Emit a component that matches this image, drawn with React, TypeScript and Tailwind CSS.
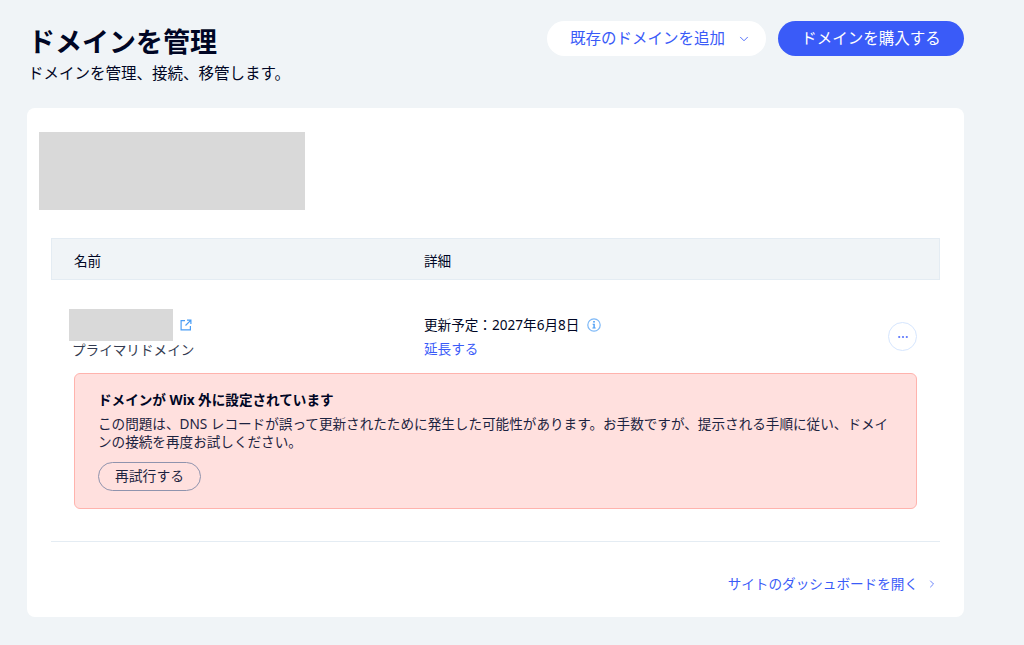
import { ChevronDown, ChevronRight } from "lucide-react";

const FONT = "font-['Noto_Sans','Noto_Sans_CJK_JP',sans-serif]";

function Header() {
  return (
    <div className="flex items-start justify-between">
      <div className="pl-px pt-[23px]">
        <h1 className="text-[27px] leading-[38px] font-bold text-[#000624]">ドメインを管理</h1>
        <p className="text-[15.5px] leading-[24px] text-[#000624]">ドメインを管理、接続、移管します。</p>
      </div>
      <div className="flex gap-3 pt-[21px]">
        <button
          type="button"
          className="flex h-[35px] w-[219px] items-center gap-3 rounded-full bg-white pl-[23px] text-[15.5px] text-[#3a5bf8]"
        >
          既存のドメインを追加
          <ChevronDown className="h-3.5 w-3.5" strokeWidth={1.5} />
        </button>
        <button
          type="button"
          className="h-[35px] w-[186px] rounded-full bg-[#3a5bf8] text-[15.5px] text-white"
        >
          ドメインを購入する
        </button>
      </div>
    </div>
  );
}

function DomainRow() {
  return (
    <div className="flex h-[93px] items-start">
      <div className="w-[373px] pl-[18px] pt-[29px]">
        <div className="flex items-center gap-[7px]">
          <div className="h-8 w-[104px] bg-[#d9d9d9]" />
          <svg viewBox="0 0 12 12" className="h-3 w-3 fill-none stroke-[#4a9df5]" strokeWidth="1.2">
            <path d="M5 1.6H1.1v9.3h9.3V7" />
            <path d="M7 1.1h3.9V5M10.7 1.3 5.5 6.5" />
          </svg>
        </div>
        <div className="pl-[3px] text-[13.6px] leading-[18px] text-[#323a50]">プライマリドメイン</div>
      </div>
      <div className="flex-1 pt-[35px] text-[13.6px] leading-5">
        <div className="flex items-center gap-2 text-[#000624]">
          更新予定：2027年6月8日
          <svg viewBox="0 0 14 14" className="h-3.5 w-3.5">
            <circle cx="7" cy="7" r="6.2" fill="none" stroke="#7db8f7" strokeWidth="1.2" />
            <rect x="6.2" y="3" width="1.6" height="1.6" fill="#4a9df5" />
            <path d="M5.6 5.8h2.2v3.6h.9v1H5.4v-1h1V6.8h-.8z" fill="#4a9df5" />
          </svg>
        </div>
        <a className="mt-1 block text-[#3a5bf8]">延長する</a>
      </div>
      <div className="pr-[23px] pt-[42px]">
        <button
          type="button"
          className="flex h-[29px] w-[29px] items-center justify-center rounded-full border border-[#d6e6fe] bg-white"
        >
          <svg viewBox="0 0 12 4" className="h-1 w-3 fill-[#5a75fd]">
            <circle cx="2.2" cy="2" r="1.1" />
            <circle cx="6" cy="2" r="1.1" />
            <circle cx="9.8" cy="2" r="1.1" />
          </svg>
        </button>
      </div>
    </div>
  );
}

function Alert() {
  return (
    <div className="mx-[23px] h-[136px] rounded-md border border-[#ffb3ad] bg-[#ffe0de] px-[23px] pt-4 text-[#000624]">
      <div className="text-[13.6px] leading-5 font-bold">ドメインが Wix 外に設定されています</div>
      <p className="mt-[5px] text-[13.6px] leading-[18px] text-[#1c2340]">
        この問題は、DNS レコードが誤って更新されたために発生した可能性があります。お手数ですが、提示される手順に従い、ドメインの接続を再度お試しください。
      </p>
      <button
        type="button"
        className="mt-[11px] block h-[29px] w-[103px] rounded-full border border-[#8f93ad] text-[13.8px] text-[#1c2340]"
      >
        再試行する
      </button>
    </div>
  );
}

export default function App() {
  return (
    <div className={`${FONT} h-[645px] w-[1024px] overflow-hidden bg-[#f0f4f7] pl-[27px] pr-[60px]`}>
      <Header />
      <div className="mt-[23px] h-[509px] rounded-lg bg-white">
        <div className="pl-3 pt-6">
          <div className="h-[78px] w-[266px] bg-[#d9d9d9]" />
        </div>
        <div className="mx-6 mt-[28px]">
          <div className="flex h-[42px] items-center border border-[#e4ecf3] bg-[#f0f4f7] pt-1 text-[13.6px] text-[#000624]">
            <div className="w-[372px] pl-[22px]">名前</div>
            <div>詳細</div>
          </div>
          <DomainRow />
          <Alert />
          <div className="mt-8 border-t border-[#e4ecf3]" />
          <div className="flex items-center justify-end gap-2 pr-0.5 pt-8 text-[13.6px] text-[#3a5bf8]">
            サイトのダッシュボードを開く
            <ChevronRight className="h-3 w-3" strokeWidth={1.5} />
          </div>
        </div>
      </div>
    </div>
  );
}
